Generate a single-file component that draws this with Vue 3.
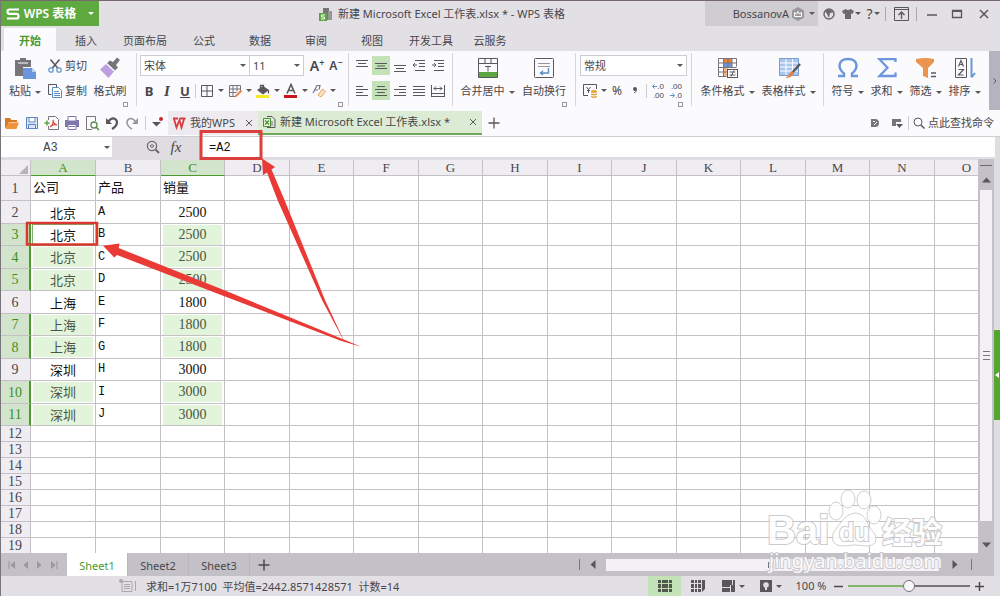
<template>
  <div class="app">
    <!-- title bar -->
    <header class="title-bar">
      <button class="brand">
        <svg width="14" height="12" viewBox="0 0 14 12"><path d="M13 1.500H3.500Q1.500 1.500 1.500 3.600Q1.500 5.900 3.500 5.900H10.500Q12.500 5.900 12.500 8.200Q12.500 10.500 10.500 10.500H1" fill="none" stroke="#fff" stroke-width="2.200" /></svg>
        <span>WPS 表格</span>
        <i class="caret light"></i>
      </button>
      <h1 class="doc-title">
        <svg width="14" height="14" viewBox="0 0 14 14" v-html="icons.doc"></svg>
        新建 Microsoft Excel 工作表.xlsx * - WPS 表格
      </h1>
      <button class="user">
        BossanovA
        <svg width="14" height="14" viewBox="0 0 14 14" v-html="icons.crown"></svg>
        <i class="caret"></i>
      </button>
      <div class="window-tools">
        <button class="w22" aria-label="同步"><svg width="12" height="12" viewBox="0 0 12 12" v-html="icons.globe"></svg></button>
        <button class="w22" aria-label="皮肤"><svg width="12" height="12" viewBox="0 0 12 12" v-html="icons.shirt"></svg><i class="caret small"></i></button>
        <button class="w22 help" aria-label="帮助">?<i class="caret small"></i></button>
        <span class="sep"></span>
        <button class="w28" aria-label="收起功能区"><svg width="15" height="14" viewBox="0 0 15 14" v-html="icons.pin"></svg></button>
        <span class="sep"></span>
        <button class="w28" aria-label="最小化"><svg width="12" height="12" viewBox="0 0 12 12"><path d="M1 7h10" stroke="#59575c" stroke-width="1.500" /></svg></button>
        <button class="w22" aria-label="最大化"><svg width="12" height="12" viewBox="0 0 12 12"><path d="M1.500 2.500v7h9v-7z" fill="none" stroke="#59575c" stroke-width="1.300" /><path d="M1 3h10" stroke="#59575c" stroke-width="2" /></svg></button>
        <button class="w32" aria-label="关闭"><svg width="12" height="12" viewBox="0 0 12 12"><path d="M2 2l8 8M10 2l-8 8" stroke="#59575c" stroke-width="1.500" /></svg></button>
      </div>
    </header>

    <nav class="menu">
      <button v-for="m in menus" :key="m" :class="{ active: m === menu }" @click="menu = m">{{ m }}</button>
    </nav>

    <!-- ribbon -->
    <section class="ribbon">
      <div class="group clipboard">
        <button class="big"><svg width="24" height="24" viewBox="0 0 24 24" v-html="icons.paste"></svg><span>粘贴<i class="caret"></i></span></button>
        <div class="stack">
          <button><svg width="14" height="14" viewBox="0 0 14 14" v-html="icons.cut"></svg>剪切</button>
          <button><svg width="14" height="14" viewBox="0 0 14 14" v-html="icons.copy"></svg>复制</button>
        </div>
        <button class="big"><svg width="24" height="24" viewBox="0 0 24 24" v-html="icons.brush"></svg><span>格式刷</span></button>
        <i class="launcher"></i>
      </div>

      <div class="group font">
        <div class="row">
          <label class="pick family"><select aria-label="字体"><option>宋体</option></select><i class="caret"></i></label>
          <label class="pick size"><select aria-label="字号"><option>11</option></select><i class="caret"></i></label>
          <button class="w20 grow">A<sup>+</sup></button>
          <button class="w18 shrink">A<sup>−</sup></button>
        </div>
        <div class="row">
          <button class="w18"><b>B</b></button>
          <button class="w18"><em>I</em></button>
          <button class="w18"><u>U</u></button>
          <span class="sep"></span>
          <button v-for="b in fontTools" :key="b" class="w28" :aria-label="b">
            <svg width="16" height="16" viewBox="0 0 16 16" v-html="icons[b]"></svg><i class="caret"></i>
          </button>
        </div>
        <i class="launcher"></i>
      </div>

      <div class="group align">
        <div class="row">
          <button v-for="b in alignTop" :key="b" class="w18" :class="{ on: b === 'middle' }" :aria-label="b">
            <svg width="14" height="16" viewBox="0 0 14 16" v-html="icons[b]"></svg>
          </button>
        </div>
        <div class="row">
          <button v-for="b in alignBottom" :key="b" class="w18" :class="{ on: b === 'center' }" :aria-label="b">
            <svg width="14" height="16" viewBox="0 0 14 16" v-html="icons[b]"></svg>
          </button>
        </div>
      </div>

      <div class="group merge">
        <button class="big"><svg width="24" height="24" viewBox="0 0 24 24" v-html="icons.merge"></svg><span>合并居中<i class="caret"></i></span></button>
        <button class="big"><svg width="24" height="24" viewBox="0 0 24 24" v-html="icons.wrap"></svg><span>自动换行</span></button>
        <i class="launcher"></i>
      </div>

      <div class="group number">
        <div class="row">
          <label class="pick format"><select aria-label="数字格式"><option>常规</option></select><i class="caret"></i></label>
        </div>
        <div class="row">
          <button class="w28" aria-label="货币"><svg width="16" height="16" viewBox="0 0 16 16" v-html="icons.money"></svg><i class="caret"></i></button>
          <button class="w18 pct">%</button>
          <button class="w18" aria-label="千位分隔"><svg width="6" height="10" viewBox="0 0 6 10"><circle cx="3" cy="3" r="2" fill="#59575c" /><path d="M4.500 3.500Q4.500 6 2 7" fill="none" stroke="#59575c" /></svg></button>
          <span class="sep"></span>
          <button class="w18 dec">
            <span><svg width="5" height="5" viewBox="0 0 5 5"><path d="M5 2.500H1M2.500 0.500l-2 2l2 2" fill="none" stroke="#5b8fc0" /></svg>.0</span>
            <span>.00</span>
          </button>
          <button class="w18 dec">
            <span>.00</span>
            <span><svg width="5" height="5" viewBox="0 0 5 5"><path d="M0 2.500h4M2.500 0.500l2 2l-2 2" fill="none" stroke="#5b8fc0" /></svg>.0</span>
          </button>
        </div>
        <i class="launcher"></i>
      </div>

      <div class="group style">
        <button class="big"><svg width="24" height="24" viewBox="0 0 24 24" v-html="icons.cond"></svg><span>条件格式<i class="caret"></i></span></button>
        <button class="big"><svg width="24" height="24" viewBox="0 0 24 24" v-html="icons.tableStyle"></svg><span>表格样式<i class="caret"></i></span></button>
      </div>

      <div class="group edit">
        <button v-for="t in editTools" :key="t.icon" class="big">
          <svg width="24" height="24" viewBox="0 0 24 24" v-html="icons[t.icon]"></svg><span>{{ t.text }}<i class="caret"></i></span>
        </button>
      </div>
      <button class="more" aria-label="更多"><svg width="6" height="8" viewBox="0 0 6 8"><path d="M1.500 1.500L4 4L1.500 6.500" fill="none" stroke="#59575c" /></svg></button>
    </section>

    <!-- quick access and document tabs -->
    <div class="doc-bar">
      <button v-for="q in quick" :key="q" class="w20" :aria-label="q">
        <svg width="16" height="16" viewBox="0 0 16 16" v-html="icons[q]"></svg>
      </button>
      <span class="sep"></span>
      <button class="w22" aria-label="自定义"><svg width="16" height="16" viewBox="0 0 16 16"><path d="M3 7h9l-4.500 4.500z" fill="#59575c" /><circle cx="12" cy="4" r="2" fill="#c8272d" /></svg></button>
      <div class="doc-tab home">
        <svg width="14" height="14" viewBox="0 0 14 14"><path d="M1 2.500h5M2 3l2.500 8.500L7.500 4l2 7.500L12 3M8 2.500h5.500" fill="none" stroke="#d83c3e" stroke-width="1.800" /></svg>
        <span>我的WPS</span>
        <button class="close" aria-label="关闭"><svg width="8" height="8" viewBox="0 0 8 8"><path d="M1 1l6 6M7 1L1 7" stroke="#59575c" /></svg></button>
      </div>
      <div class="doc-tab current">
        <svg width="14" height="14" viewBox="0 0 14 14" v-html="icons.xls"></svg>
        <span>新建 Microsoft Excel 工作表.xlsx *</span>
        <button class="close" aria-label="关闭"><svg width="8" height="8" viewBox="0 0 8 8"><path d="M1 1l6 6M7 1L1 7" stroke="#59575c" /></svg></button>
      </div>
      <button class="add" aria-label="新建"><svg width="12" height="12" viewBox="0 0 12 12"><path d="M6 0.500v11M0.500 6h11" stroke="#59575c" stroke-width="1.300" /></svg></button>
      <div class="doc-right">
        <button class="w22" aria-label="文档"><svg width="12" height="12" viewBox="0 0 12 12"><path d="M2 2h4q4 0 4 4t-4 4H2z" fill="#77757a" /><path d="M4 4.500h2M5 8l3-3" stroke="#fff" /></svg></button>
        <button class="w22" aria-label="视图"><svg width="12" height="12" viewBox="0 0 12 12"><path d="M1 2h9v3H5v4H1z" fill="#77757a" /><path d="M5 7h7L8.500 11z" fill="#59575c" /></svg></button>
        <span class="sep"></span>
        <button class="search"><svg width="12" height="12" viewBox="0 0 12 12"><circle cx="5" cy="5" r="4" fill="none" stroke="#59575c" /><path d="M8 8l3.500 3.500" stroke="#59575c" stroke-width="1.500" /></svg>点此查找命令</button>
      </div>
    </div>

    <!-- formula bar -->
    <div class="formula-bar">
      <label class="name-box"><input v-model="cellName" aria-label="名称框" /><i class="caret"></i></label>
      <button class="lens" aria-label="浏览公式"><svg width="14" height="14" viewBox="0 0 14 14"><circle cx="6" cy="6" r="4.600" fill="none" stroke="#6b696e" stroke-width="1.300" /><path d="M9.500 9.500L13 13" stroke="#6b696e" stroke-width="2" /><path d="M4 6q2-3 4 0q-2 3-4 0" fill="none" stroke="#6b696e" /></svg></button>
      <button class="fx">fx</button>
      <input v-model="formula" class="formula" aria-label="编辑栏" />
    </div>

    <!-- sheet -->
    <main class="work">
      <div class="left">
        <div class="body">
          <div class="sheet">
            <table>
              <colgroup>
                <col class="c-head" />
                <col v-for="(c, i) in cols" :key="c" :class="i > 1 && i % 2 === 0 ? 'c-narrow' : 'c-wide'" />
              </colgroup>
              <thead>
                <tr>
                  <th class="corner"><svg width="9" height="9" viewBox="0 0 9 9"><path d="M9 0v9H0z" fill="#b5b3b8" /></svg></th>
                  <th v-for="c in cols" :key="c" :class="{ sel: c === 'A' || c === 'C' }">{{ c }}</th>
                </tr>
              </thead>
              <tbody>
                <tr v-for="r in 19" :key="r" :class="rowClass(r)">
                  <th :class="{ sel: picked.includes(r) }">{{ r }}</th>
                  <td v-for="(c, i) in cols" :key="c" :class="cellClass(r, i)"><span>{{ rows[r - 1]?.[i] }}</span></td>
                </tr>
              </tbody>
            </table>
          </div>
          <div class="vscroll">
            <i class="split"></i>
            <button aria-label="向上"><svg width="9" height="6" viewBox="0 0 9 6"><path d="M0 5.500h9L4.500 0.500z" fill="#59575c" /></svg></button>
            <div class="thumb"><i></i><i></i><i></i></div>
            <button aria-label="向下"><svg width="9" height="6" viewBox="0 0 9 6"><path d="M0 0.500h9L4.500 5.500z" fill="#59575c" /></svg></button>
          </div>
        </div>
        <div class="sheet-bar">
          <button class="nav" aria-label="第一张"><svg width="8" height="8" viewBox="0 0 8 8"><path d="M1 0v8" stroke="#99979c" /><path d="M7 0v8L2.500 4z" fill="#99979c" /></svg></button>
          <button class="nav" aria-label="上一张"><svg width="8" height="8" viewBox="0 0 8 8"><path d="M6 0v8L1.500 4z" fill="#99979c" /></svg></button>
          <button class="nav" aria-label="下一张"><svg width="8" height="8" viewBox="0 0 8 8"><path d="M1 0v8L5.500 4z" fill="#99979c" /></svg></button>
          <button class="nav" aria-label="最后一张"><svg width="8" height="8" viewBox="0 0 8 8"><path d="M7 0v8" stroke="#99979c" /><path d="M1 0v8L5.500 4z" fill="#99979c" /></svg></button>
          <button v-for="s in sheets" :key="s" class="sheet-tab" :class="{ active: s === sheet }" @click="sheet = s">{{ s }}</button>
          <button class="add-sheet" aria-label="新建工作表"><svg width="12" height="12" viewBox="0 0 12 12"><path d="M6 0.500v11M0.500 6h11" stroke="#4a484d" stroke-width="1.500" /></svg></button>
          <div class="hscroll">
            <i class="bar"></i>
            <button class="w26" aria-label="向左"><svg width="6" height="9" viewBox="0 0 6 9"><path d="M5.500 0v9L0.500 4.500z" fill="#59575c" /></svg></button>
            <div class="track"><i></i><i></i><i></i></div>
            <button class="w32" aria-label="向右"><svg width="6" height="9" viewBox="0 0 6 9"><path d="M0.500 0v9L5.500 4.500z" fill="#59575c" /></svg></button>
            <i class="bar"></i>
          </div>
        </div>
      </div>
      <aside class="rail">
        <button class="handle" aria-label="展开任务窗格"><svg width="4" height="6" viewBox="0 0 4 6"><path d="M4 0v6L0 3z" fill="#fff" /></svg></button>
      </aside>
    </main>

    <footer class="status">
      <svg class="macro" width="18" height="14" viewBox="0 0 18 14"><path d="M3 2.500h10v10H3zM5 5.500h6M5 7.500h6M5 9.500h6" fill="none" stroke="#aaa8ad" /><circle cx="2" cy="2" r="2" fill="#aaa8ad" /><path d="M16.500 2v10" stroke="#aaa8ad" /></svg>
      <span class="sum">求和=1万7100&nbsp; 平均值=2442.8571428571&nbsp; 计数=14</span>
      <div class="views">
        <button class="on" aria-label="普通"><svg width="14" height="12" viewBox="0 0 14 12"><path d="M0 0h14v12H0z" fill="#4f5a4b" /><path d="M0 3.500h14M0 8.500h14M3.500 0v12M10.500 0v12" stroke="#c2dcb5" /></svg></button>
        <button aria-label="分页"><svg width="14" height="12" viewBox="0 0 14 12"><path d="M0 0h14v9l-3 3H0z" fill="#59575c" /><path d="M0 3.500h10M0 8.500h10M3.500 0v12M6.500 0v12M10.500 0v12" stroke="#dfdde2" /></svg></button>
        <button aria-label="阅读"><svg width="13" height="12" viewBox="0 0 13 12"><path d="M0 0h13v12H0z" fill="#59575c" /><path d="M0 7.500h8M8.500 5v7M10.500 0v5" stroke="#dfdde2" /></svg><i class="caret"></i></button>
        <button aria-label="护眼"><svg width="12" height="12" viewBox="0 0 12 12"><path d="M0 0h12v12H0z" fill="#59575c" /><circle cx="6" cy="5" r="2.800" fill="#dfdde2" /><path d="M5 7h2v3H5z" fill="#dfdde2" /></svg><i class="caret"></i></button>
      </div>
      <span class="pct-text">{{ zoom }} %</span>
      <button class="step" aria-label="缩小" @click="zoom -= 10"><svg width="9" height="9" viewBox="0 0 9 9"><path d="M0 4.500h9" stroke="#4a484d" stroke-width="1.500" /></svg></button>
      <input v-model.number="zoom" class="slider" type="range" min="0" max="200" aria-label="缩放" />
      <button class="step" aria-label="放大" @click="zoom += 10"><svg width="9" height="9" viewBox="0 0 9 9"><path d="M0 4.500h9M4.500 0v9" stroke="#4a484d" stroke-width="1.500" /></svg></button>
    </footer>

    <!-- red marks over the sheet -->
    <svg class="marks" width="380" height="360" viewBox="0 0 380 360">
      <rect x="201" y="131.500" width="60" height="27" fill="none" stroke="#dd3f3d" stroke-width="3" />
      <rect x="27" y="223" width="70" height="21.500" fill="none" stroke="#d8382f" stroke-width="2.500" />
      <path d="M262 158.500L275 167L271.500 169.500L284.500 200L325 300L345.500 344L322 300L277.500 200L267 172.500L263 175Z" fill="#ea3a36" />
      <path d="M103 245.700L119.500 243.500L118.700 248L230 292.500L345 340L361.500 347L340 340.500L225 296.500L117 255L114.300 257.500Z" fill="#ea3a36" />
    </svg>

    <!-- watermark -->
    <svg class="watermark" width="184" height="86" viewBox="0 0 184 86">
      <g fill="#fff" stroke="#c9c9cb">
        <ellipse cx="70" cy="22" rx="7" ry="9" />
        <ellipse cx="82" cy="10" rx="7" ry="9" />
        <ellipse cx="98" cy="11" rx="7" ry="9" />
        <ellipse cx="108" cy="26" rx="7" ry="9" />
        <path d="M89 24q8 0 12 9t8 12q4 11-7 12q-13-2-26 0q-12-1-9-12q2-4 8-12t14-9z" />
      </g>
      <text class="wm-big" x="1" y="55">Bai</text>
      <text class="wm-du" x="73" y="52">du</text>
      <text class="wm-cn" x="116" y="54">经验</text>
      <text class="wm-url" x="3" y="79">jingyan.baidu.com</text>
    </svg>
  </div>
</template>

<script setup>
  import { ref } from 'vue';

  const menus = ['开始', '插入', '页面布局', '公式', '数据', '审阅', '视图', '开发工具', '云服务'];
  const menu = ref('开始');
  const sheets = ['Sheet1', 'Sheet2', 'Sheet3'];
  const sheet = ref('Sheet1');
  const cellName = ref('A3');
  const formula = ref('=A2');
  const zoom = ref(100);

  const cols = 'ABCDEFGHIJKLMNO'.split('');
  const rows = [
    ['公司', '产品', '销量'],
    ['北京', 'A', 2500],
    ['北京', 'B', 2500],
    ['北京', 'C', 2500],
    ['北京', 'D', 2500],
    ['上海', 'E', 1800],
    ['上海', 'F', 1800],
    ['上海', 'G', 1800],
    ['深圳', 'H', 3000],
    ['深圳', 'I', 3000],
    ['深圳', 'J', 3000]
  ];
  // rows of the multi-selection in columns A and C
  const picked = [3, 4, 5, 7, 8, 10, 11];

  const rowClass = (r) => {
    if (r === 1) return 'r-first';
    if (r > 11) return 'r-empty';
    return r % 2 ? 'r-odd' : 'r-even';
  };
  const cellClass = (r, i) => ({
    mid: r > 1 && (i === 0 || i === 2),
    picked: picked.includes(r) && (i === 0 || i === 2),
    active: r === 3 && i === 0
  });

  const fontTools = ['border', 'drawTable', 'fill', 'color', 'eraser'];
  const alignTop = ['top', 'middle', 'bottom', 'outdent', 'indent'];
  const alignBottom = ['left', 'center', 'right', 'justify', 'spread'];
  const editTools = [
    { icon: 'omega', text: '符号' },
    { icon: 'sigma', text: '求和' },
    { icon: 'funnel', text: '筛选' },
    { icon: 'sort', text: '排序' }
  ];
  const quick = ['open', 'save', 'pdf', 'print', 'preview', 'undo', 'redo'];

  const line = (d, c = '#59575c', w = 1) => `<path d="${d}" fill="none" stroke="${c}" stroke-width="${w}"/>`;
  const area = (d, c = '#6b696e') => `<path d="${d}" fill="${c}"/>`;

  const icons = {
    doc: area('M4 1h6v12H4z', '#77757a') + area('M9 4h4v9H9z', '#99979c') + area('M0 6h8v8H0z', '#5da543') + line('M6 8H2.500v2h3v2H2', '#fff'),
    crown: area('M7 0l6 3.500v7L7 14L1 10.500v-7z', '#99979c') + line('M3.500 5.500v4h7v-4L8.500 7L7 4.500L5.500 7z', '#fff'),
    globe: '<circle cx="6" cy="6" r="5" fill="none" stroke="#6b696e" stroke-width="1.500"/>' + area('M2 3l4-2l5 3l-4 1l-1 5l-2-4z'),
    shirt: area('M3.500 1L0 3l1.500 3L3 5.500V11h6V5.500l1.500 0.500L12 3L8.500 1Q6 3 3.500 1z'),
    pin: line('M0.500 0.500h14v13h-14zM0.500 2.500h14') + line('M7.500 12V5M4.500 8l3-3l3 3', '#59575c', 1.3),
    paste: area('M2 4h5V2h6v2h5v7h-8v9H2z', '#77757a') + line('M5 7h10', '#fff') + area('M10 12h9l4 4v7H10z', '#6b96dc') + area('M19 12v4h4z', '#b9d0f3'),
    cut: line('M2.500 0.500L10 9.500M11.500 0.500L4 9.500', '#59575c', 1.5) + '<circle cx="3" cy="11" r="2.200" fill="none" stroke="#6b9bd2" stroke-width="1.300"/><circle cx="11" cy="11" r="2.200" fill="none" stroke="#6b9bd2" stroke-width="1.300"/>',
    copy: line('M3.500 10.500h-3v-10h8v3') + '<path d="M4.500 3.500h6l3 3v7h-9z" fill="#fff" stroke="#5b8fc0"/>' + line('M6 7.500h5M6 9.500h6M6 11.500h6', '#5b8fc0'),
    brush: area('M19 1.500l3 2.500l-4 5l2 2.500l-3 3L9 7l3-2.500l3 1.500z', '#77757a') + area('M8 8l8 7.500L10.500 22L2 13.500z', '#c09fe0'),
    border: line('M2.500 2.500h11v11h-11zM8 2v12M2 8h12'),
    drawTable: line('M2.500 2.500h11v6M2.500 2.500v11h6M2.500 6h11M2.500 9.500h7M6 2.500v11M10 2.500v6', '#77757a') + line('M8.500 13.500l6-6', '#e38350', 2),
    fill: area('M2 7l6-4l6 4l-6 4.500z', '#59575c') + line('M5.500 5V2.500h3V5M13.500 7v3.500', '#59575c', 1.3) + area('M1 12h13v3H1z', '#f4ec20'),
    color: line('M4 10.500L8 1.500L12 10.500M5.500 7.500h5', '#59575c', 1.6) + area('M1 12h13v3H1z', '#c4161c'),
    eraser: line('M2 10L6 2.500h3l-1 4M4 7h3', '#77757a', 1.2) + '<path d="M7 12l4.500-6l3 2.500L10 14z" fill="#fbe3c8" stroke="#e5a45c"/>',
    top: line('M1 2.500h12M3 5.500h8M1 8.500h12'),
    middle: line('M1 5.500h12M3 8h8M1 10.500h12'),
    bottom: line('M1 7.500h12M3 10.500h8M1 13.500h12'),
    outdent: line('M3 2.500h10M7 5.500h6M7 8.500h6M3 12.500h10M1 7h4M3 5L1 7l2 2'),
    indent: line('M3 2.500h10M7 5.500h6M7 8.500h6M3 12.500h10M1 7h4M3 5l2 2l-2 2'),
    left: line('M1 3.500h7M1 6.500h12M1 9.500h7M1 12.500h12'),
    center: line('M3 3.500h8M1 6.500h12M3 9.500h8M1 12.500h12'),
    right: line('M6 3.500h7M1 6.500h12M6 9.500h7M1 12.500h12'),
    justify: line('M1 3.500h12M1 6.500h12M1 9.500h12M1 12.500h12'),
    spread: line('M0.500 2v12M13.500 2v12M3 5.500h8M5 3.500l-2 2l2 2M9 3.500l2 2l-2 2M1 10.500h12M1 13.500h12'),
    merge: line('M2.500 2.500h19v19h-19zM2.500 7.500h19M9 2.500v5M15 2.500v5M9 10.500h6M12 10.500v5') + area('M3 16h18v5H3z', '#5da543'),
    wrap: '<rect x="2.500" y="2.500" width="19" height="19" rx="1" fill="none" stroke="#59575c"/>' + line('M6 7.500h12M6 10.500h12', '#99979c') + line('M16.500 12v5H9M11 15l-2.500 2l2.500 2', '#5b8fc0', 1.4),
    money: line('M11 1.500H1.500v11H6M14.500 6V1.500H11') + line('M4.500 4L6.500 6.500L8.500 4M6.500 6v4M5 7.500h3', '#59575c') + area('M9 8q3-2 6 0v6q-3 2-6 0z', '#e5a03c') + line('M9 10q3 1 6 0M9 12.500q3 1 6 0', '#fff'),
    cond: area('M3 2h18v18H3z', '#fff') + area('M8 3h8v4H8z', '#e8813c') + area('M8 7h8v5H8z', '#6b96dc') + area('M8 12h4v8H8z', '#f1b48c') + line('M2.500 2.500h18v8M2.500 2.500v18h8M2.500 7h18M2.500 11.500h18M2.500 16h8M7.500 2.500v18M12 2.500v9M16 2.500v9', '#77757a') + '<rect x="11.500" y="13.500" width="10" height="8" fill="#fff" stroke="#59575c"/>' + line('M13.500 16h6M13.500 19h6M18 14.500l-3 6'),
    tableStyle: area('M2 2h20v18H2z', '#a9c6ee') + line('M2.500 2.500h19v17h-19zM2 7h20M2 11h20M2 15h20M9 2v18M15.500 2v18', '#fff', 1) + line('M2.500 2.500h19v17h-19z', '#7b9ccc') + line('M23 8l-8 9', '#59575c', 2.4) + area('M15 15l2 2q-2 5-9 5q4-2 4-4z', '#e8813c'),
    omega: line('M2 20h6v-2.500Q3.500 14 3.500 9.500Q4 3 12 3t8.500 6.500q0 4.500-4.500 8V20h6', '#6b96dc', 2.4),
    sigma: line('M20.500 6V3.200H4.500l8 8.500L4.500 20h16v-3.500', '#6b96dc', 2.3),
    funnel: area('M2 3q9-2 18 0v3l-6 6v10l-5-2v-8L2 6z', '#eb9450') + line('M17 17h5M17 20.500h5', '#59575c', 1.5),
    sort: line('M2.500 2.500h11v19h-11z') + line('M5.500 10.500l2.500-6l2.500 6M6.500 8.500h3M5.500 13.500h5l-5 5.500h5', '#59575c', 1.2) + line('M18.500 2v19M22 17l-3.500 4.500', '#6b96dc', 2),
    open: area('M1 3h5l1.500 2H13v2H5l-2 5l-2 1z', '#d87b20') + area('M5 7.500h10L12.500 14H1.500z', '#f0943c'),
    save: '<path d="M2.500 2.500h11v11h-11z" fill="#dbe7f8" stroke="#5b86c4"/>' + area('M5 3h6v4H5z', '#fff') + line('M5 3v4h6V3M4.500 13.500v-4h7v4', '#5b86c4'),
    pdf: line('M4.500 5V1.500h7l3 3v10h-10V11', '#77757a') + line('M6 12q4-3 3-7q0 4 4 5q-4-1-7 2', '#d8423e', 1.2) + line('M0.500 8h5M3 5.500v5', '#5da543', 1.5),
    print: area('M1 5h14v7H1z', '#7c78ae') + '<path d="M4 1.500h8V6H4zM4 9.500h8v5H4z" fill="#fff" stroke="#7c78ae"/>' + line('M5 11.500h6', '#7c78ae'),
    preview: line('M8 14.500H2.500v-13h9V6', '#77757a') + '<circle cx="10" cy="10" r="3" fill="#fff" stroke="#5a8a4c" stroke-width="1.300"/>' + line('M12 12l3 3', '#5a8a4c', 1.6),
    undo: line('M4 7q3-4 6-3.500q3 1 3 4q-0.500 4-5 6.500', '#59575c', 2.2) + area('M2 3v6h6z', '#59575c'),
    redo: line('M12 7q-3-4-6-3.500q-3 1-3 4q0.500 4 5 6.500', '#99979c', 1.6) + area('M14 3v6H8z', '#99979c'),
    xls: line('M5 1.500h5l3 3v8H5', '#59575c') + line('M10 6v5', '#77757a') + '<path d="M1.500 3.500h7v8h-7z" fill="#e8f3e2" stroke="#4c8f35"/>' + line('M3 5.500l4 4M7 5.500l-4 4', '#4c8f35', 1.3)
  };
</script>

<style>
  html,
  body {
    overflow: hidden;
    background: #dfdde2;
  }
</style>

<style scoped>
  .app {
    position: relative;
    display: flex;
    flex-direction: column;
    height: 100vh;
    box-sizing: border-box;
    border-left: 1px solid #77757a;
    background: #e2e0e5;
    color: #48464b;
    font-family: "Noto Sans", "Noto Sans CJK SC", sans-serif;
    font-size: 11px;
    line-height: 16px;
  }
  .app * {
    box-sizing: border-box;
  }
  button,
  input,
  select {
    margin: 0;
    padding: 0;
    border: 0;
    background: none;
    color: inherit;
    font: inherit;
  }
  button {
    display: flex;
    align-items: center;
    justify-content: center;
    white-space: nowrap;
    flex: none;
  }
  svg {
    flex: none;
    display: block;
  }
  .caret {
    display: inline-block;
    flex: none;
    border: 3px solid transparent;
    border-top-color: #59575c;
    border-bottom: 0;
    margin-left: 4px;
    vertical-align: middle;
  }
  .caret.light {
    border-top-color: #fff;
    margin-left: 8px;
  }
  .caret.small {
    margin-left: 1px;
  }
  .sep {
    flex: none;
    width: 1px;
    height: 14px;
    background: #cfcdd2;
  }
  .w18 { width: 18px; }
  .w20 { width: 20px; }
  .w22 { width: 22px; }
  .w26 { width: 26px; }
  .w28 { width: 28px; }
  .w32 { width: 32px; }

  /* title bar */
  .title-bar {
    display: flex;
    flex: none;
    height: 28px;
    border-top: 1px solid #77696d;
  }
  .brand {
    width: 98px;
    height: 25px;
    gap: 4px;
    background: #5fa941;
    color: #fff;
    font-size: 12px;
    font-weight: 600;
  }
  .doc-title {
    display: flex;
    flex: 1;
    align-items: center;
    justify-content: center;
    gap: 5px;
    height: 25px;
    margin: 0;
    padding-left: 80px;
    font-size: 11px;
    font-weight: 400;
    white-space: nowrap;
  }
  .user {
    justify-content: flex-end;
    width: 113px;
    height: 25px;
    padding-right: 3px;
    gap: 2px;
    background: #cfcdd1;
  }
  .user .caret {
    margin-left: 2px;
  }
  .window-tools {
    display: flex;
    align-items: center;
    height: 25px;
  }
  .window-tools .sep {
    margin: 0 1px;
    background: #aaa8ad;
  }
  .help {
    font-size: 14px;
  }

  .menu {
    display: flex;
    flex: none;
    height: 23px;
    padding-left: 1px;
  }
  .menu button {
    min-width: 52px;
    margin: 0 2px;
    padding: 2px 7px 0;
  }
  .menu .active {
    background: #fbfafd;
    color: #4c9a2e;
    font-weight: 700;
  }

  /* ribbon */
  .ribbon {
    display: flex;
    flex: none;
    height: 59px;
    background: #fbfafd;
  }
  .group {
    position: relative;
    display: flex;
    flex: none;
    margin: 2px 0 4px;
    border-right: 1px solid #d9d7dc;
  }
  .launcher {
    position: absolute;
    right: 8px;
    bottom: -1px;
    width: 5px;
    height: 5px;
    border: 1px solid #99979c;
  }
  .row {
    display: flex;
    align-items: center;
    height: 25px;
  }
  .big {
    flex-direction: column;
    justify-content: flex-start;
    gap: 3px;
    padding-top: 3px;
  }
  .big span {
    line-height: 16px;
  }
  .clipboard {
    width: 136px;
    padding-left: 7px;
  }
  .clipboard .big {
    width: 34px;
  }
  .stack {
    width: 51px;
    padding-left: 6px;
  }
  .stack button {
    height: 25px;
    gap: 3px;
  }
  .font,
  .align,
  .number {
    flex-direction: column;
  }
  .font {
    width: 212px;
    padding-left: 3px;
  }
  .font .launcher { right: 5px; }
  .pick {
    position: relative;
    display: flex;
    align-items: center;
    height: 21px;
    border: 1px solid #cfcdd2;
    background: #fff;
  }
  .pick select {
    width: 100%;
    padding-left: 3px;
    appearance: none;
    outline: 0;
  }
  .pick .caret {
    position: absolute;
    right: 3px;
  }
  .family { width: 110px; }
  .size {
    width: 55px;
    margin-left: -1px;
  }
  .grow,
  .shrink {
    margin-left: 3px;
    font-weight: 600;
    font-size: 14px;
  }
  .shrink { font-size: 12px; margin-left: 0; }
  .grow sup,
  .shrink sup {
    font-size: 9px;
    line-height: 9px;
    align-self: flex-start;
  }
  .font b,
  .font u {
    font-weight: 700;
    font-size: 13px;
  }
  .font em {
    font-family: "Liberation Serif", serif;
    font-size: 15px;
    font-weight: 600;
  }
  .font .row .sep {
    margin: 0 1px;
  }
  .font .caret,
  .number .w28 .caret {
    margin-left: 3px;
  }
  .align {
    width: 104px;
    padding-left: 4px;
  }
  .align .row {
    gap: 1px;
  }
  .on {
    background: #c4e2b7;
  }
  .align .on {
    height: 19px;
  }
  .merge {
    width: 123px;
    padding-left: 4px;
  }
  .merge .big { width: 61px; }
  .merge .big + .big { width: 52px; }
  .number {
    width: 116px;
    padding-left: 4px;
  }
  .format { width: 107px; }
  .pct { font-size: 12px; }
  .number .sep { margin: 0 2px; }
  .dec {
    flex-direction: column;
    align-items: flex-end;
    padding-right: 3px;
    font-family: "Liberation Sans", sans-serif;
    font-size: 8px;
    line-height: 9px;
  }
  .dec span {
    display: flex;
    align-items: center;
  }
  .style {
    width: 132px;
    padding-left: 5px;
  }
  .style .big { width: 61px; }
  .edit {
    padding-left: 4px;
    border: 0;
  }
  .edit .big { width: 39px; }
  .more {
    width: 11px;
    margin-left: auto;
    background: #b5b3bf;
  }

  /* document tabs */
  .doc-bar {
    display: flex;
    align-items: center;
    flex: none;
    height: 27px;
    background: #fbfafd;
    border-bottom: 1px solid #cfcdd2;
    padding-left: 1px;
  }
  .doc-bar > .sep { margin-left: 3px; }
  .doc-tab {
    display: flex;
    align-items: center;
    flex: none;
    height: 24px;
    gap: 4px;
    padding: 0 4px;
    background: #edebef;
    white-space: nowrap;
  }
  .home { width: 90px; }
  .current {
    width: 224px;
    background: #dcecd4;
    border-bottom: 2px solid #6ea85a;
  }
  .close {
    width: 10px;
    margin-left: auto;
  }
  .add { width: 24px; }
  .doc-right {
    display: flex;
    align-items: center;
    margin-left: auto;
    padding-right: 6px;
  }
  .search {
    gap: 3px;
    padding-left: 4px;
  }

  /* formula bar */
  .formula-bar {
    display: flex;
    flex: none;
    height: 20px;
    padding-right: 5px;
    background: #dfdde2;
    font-family: "Liberation Mono", monospace;
    font-size: 12px;
  }
  .name-box {
    display: flex;
    align-items: center;
    width: 111px;
    padding-right: 2px;
    background: #fff;
  }
  .name-box input {
    flex: 1;
    min-width: 0;
    padding-top: 2px;
    text-align: center;
    outline: 0;
  }
  .lens {
    width: 22px;
    margin-left: 30px;
  }
  .fx {
    width: 24px;
    font: italic 15px "Liberation Serif", serif;
  }
  .formula {
    flex: 1;
    margin-left: 12px;
    padding: 2px 0 0 9px;
    background: #fff;
    color: #111;
    outline: 0;
  }

  /* sheet */
  .work {
    display: flex;
    flex: 1;
    min-height: 0;
  }
  .left {
    display: flex;
    flex-direction: column;
    flex: 1;
    min-width: 0;
  }
  .body {
    display: flex;
    flex: 1;
    min-height: 0;
  }
  .sheet {
    flex: 1;
    min-width: 0;
    overflow: hidden;
    background: #fff;
    border-top: 3px solid #dfdde2;
  }
  table {
    width: 998px;
    table-layout: fixed;
    border-collapse: separate;
    border-spacing: 0;
    font-family: "Liberation Mono", "Noto Sans CJK SC", monospace;
    font-size: 12px;
  }
  .c-head { width: 30px; }
  .c-wide { width: 65px; }
  .c-narrow { width: 64px; }
  th,
  td {
    padding: 0;
    border-right: 1px solid #c3c1c6;
    border-bottom: 1px solid #c3c1c6;
    line-height: 15px;
    white-space: nowrap;
  }
  th {
    background: #efedf1;
    font-family: "Liberation Serif", serif;
    font-weight: 400;
    text-align: center;
  }
  thead th {
    height: 16px;
    font-size: 13px;
  }
  tbody th {
    padding-right: 1px;
    font-size: 14px;
  }
  .corner svg {
    margin: 3px 2px 0 auto;
  }
  th.sel {
    background: #d3e4cd;
    color: #3f8f22;
  }
  thead th.sel { border-bottom: 1px solid #4c9a2e; }
  tbody th.sel {
    padding-right: 0;
    border-right: 2px solid #4c9a2e;
  }
  td {
    color: #111;
    padding: 0 2px;
  }
  td span {
    display: block;
  }
  .r-first { height: 25px; }
  .r-first td { font-size: 13px; }
  .r-even { height: 23px; }
  .r-odd { height: 22px; }
  .r-empty { height: 16px; }
  .mid {
    text-align: center;
    font-family: "Liberation Serif", serif;
    font-size: 14px;
  }
  .mid:nth-child(2) {
    font-family: "Noto Sans CJK SC", sans-serif;
    font-size: 13px;
  }
  .picked span {
    height: 20px;
    line-height: 20px;
    background: #e2f4d9;
    color: #4a5547;
  }
  .active span {
    background: #fff;
    color: #111;
    outline: 1px solid #7fae6c;
  }

  .vscroll {
    display: flex;
    flex-direction: column;
    align-items: center;
    flex: none;
    width: 16px;
    margin-top: 2px;
    background: #c3c1c7;
  }
  .split {
    width: 12px;
    height: 1px;
    margin: 6px 0;
    background: #6b696e;
  }
  .vscroll button {
    width: 16px;
    height: 16px;
  }
  .thumb {
    display: flex;
    flex-direction: column;
    align-items: center;
    justify-content: center;
    gap: 3px;
    flex: 1;
    width: 12px;
    margin: 2px 2px 16px;
    background: #f3f1f6;
  }
  .thumb i {
    width: 7px;
    height: 1px;
    background: #77757a;
  }
  .rail {
    display: flex;
    align-items: center;
    width: 6px;
    background: #dfdde2;
  }
  .handle {
    width: 6px;
    height: 90px;
    margin-top: 16px;
    background: #55a630;
  }

  .sheet-bar {
    display: flex;
    align-items: center;
    flex: none;
    height: 23px;
    padding-left: 4px;
    background: #c3c1c7;
  }
  .nav { width: 14px; }
  .nav:nth-child(4) { margin-right: 6px; }
  .sheet-tab {
    width: 61px;
    height: 23px;
    padding-top: 2px;
    border-right: 1px solid #b8b6bb;
  }
  .sheet-tab.active {
    background: #fff;
    color: #4c9a2e;
  }
  .add-sheet { width: 28px; }
  .hscroll {
    display: flex;
    align-items: center;
    width: 42%;
    margin-left: auto;
  }
  .bar {
    width: 1px;
    height: 11px;
    background: #77757a;
  }
  .hscroll .bar:last-child { margin-right: 22px; }
  .track {
    display: flex;
    align-items: center;
    justify-content: center;
    gap: 3px;
    flex: 1;
    height: 12px;
    background: #f3f1f6;
  }
  .track i {
    width: 1px;
    height: 6px;
    background: #77757a;
  }

  /* status bar */
  .status {
    display: flex;
    align-items: center;
    flex: none;
    height: 20px;
    padding-right: 14px;
    white-space: nowrap;
  }
  .macro { margin: 0 9px 0 118px; }
  .sum { padding-top: 1px; }
  .views {
    display: flex;
    align-self: stretch;
    margin-left: auto;
  }
  .views button { width: 33px; }
  .views button:nth-child(n + 3) { width: 38px; }
  .pct-text {
    width: 42px;
    text-align: center;
  }
  .step { width: 13px; }
  .slider {
    width: 122px;
    height: 14px;
    margin: 0 3px;
    appearance: none;
    outline: 0;
  }
  .slider::-webkit-slider-runnable-track {
    height: 2px;
    background: linear-gradient(90deg, #83b56c 50%, #77757a 50%);
  }
  .slider::-webkit-slider-thumb {
    appearance: none;
    width: 12px;
    height: 12px;
    margin-top: -5px;
    border: 1px solid #77757a;
    border-radius: 50%;
    background: #f7f6f9;
  }

  .marks {
    position: absolute;
    left: -1px;
    top: 0;
    pointer-events: none;
  }
  .watermark {
    position: absolute;
    right: 50px;
    bottom: 21px;
    pointer-events: none;
    opacity: 0.85;
  }
  .watermark text {
    fill: #fff;
    stroke: #c3c3c6;
    stroke-width: 2px;
    paint-order: stroke;
  }
  .wm-big {
    font: 700 40px "Liberation Sans", sans-serif;
  }
  .wm-du {
    font: 700 25px "Liberation Sans", sans-serif;
  }
  .wm-cn {
    font: 700 30px "Noto Sans CJK SC", sans-serif;
  }
  .wm-url {
    font: 20px "Noto Sans", sans-serif;
  }
</style>
